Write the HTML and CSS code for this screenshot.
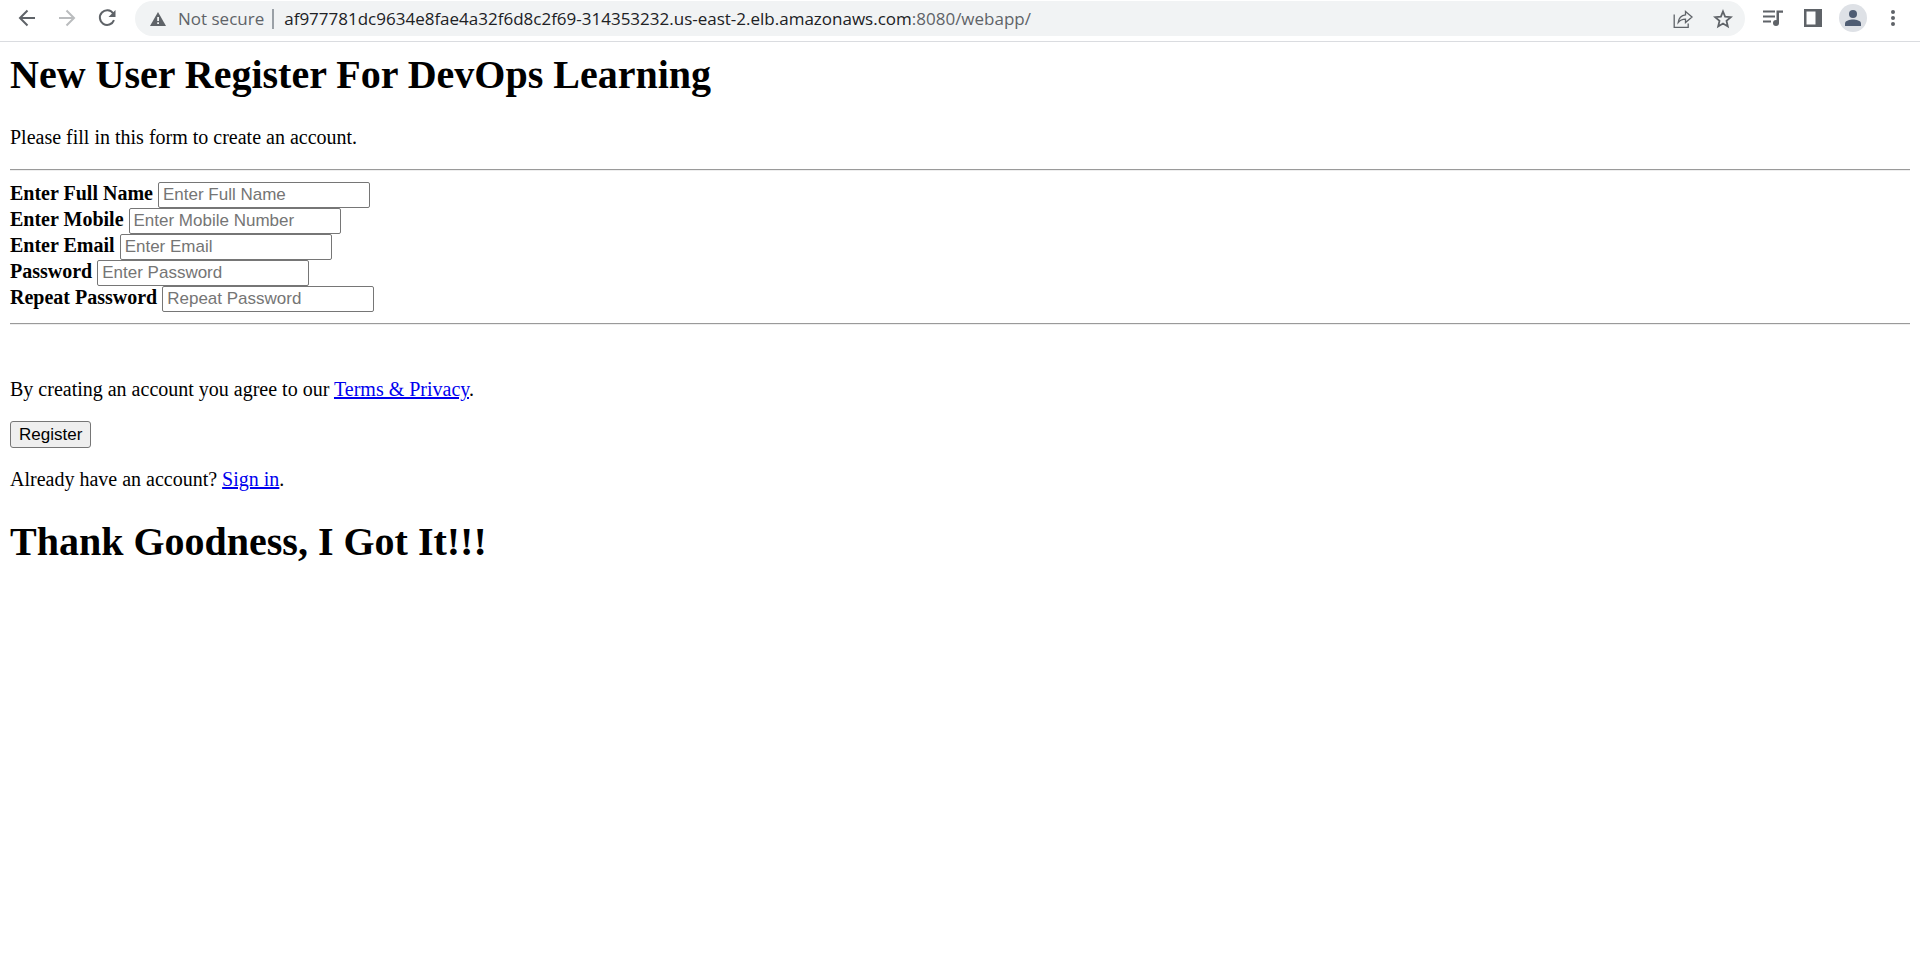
FILE: index.html
```html
<!DOCTYPE html>
<html lang="en">
<head>
<meta charset="utf-8">
<title>New User Register For DevOps Learning</title>
<link rel="stylesheet" href="styles.css">
</head>
<body>
<header class="toolbar">
  <nav class="nav">
    <button class="tool" type="button" aria-label="Back">
      <svg width="20" height="20" viewBox="0 0 20 20" fill="none" stroke="#5f6368" stroke-width="2"><path d="M18 10H3.500M10.500 2.500L3 10l7.500 7.500"/></svg>
    </button>
    <button class="tool" type="button" aria-label="Forward" disabled>
      <svg width="20" height="20" viewBox="0 0 20 20" fill="none" stroke="#babcbe" stroke-width="2"><path d="M2 10h14.500M9.500 2.500L17 10l-7.500 7.500"/></svg>
    </button>
    <button class="tool" type="button" aria-label="Reload">
      <svg width="20" height="20" viewBox="0 0 20 20"><path d="M16.200 5.500A7.300 7.300 0 1 0 17 12.200" fill="none" stroke="#5f6368" stroke-width="2"/><path d="M18.500 2v7h-7z" fill="#5f6368"/></svg>
    </button>
  </nav>
  <div class="omnibox">
    <svg width="16" height="14" viewBox="0 0 16 14"><path d="M8 0l8 14H0z" fill="#5f6368"/><path d="M7.200 5h1.800v4H7.200zM7.200 10.300h1.800V12H7.200z" fill="#f1f3f4"/></svg>
    <span class="security">Not secure</span>
    <span class="divider"></span>
    <span class="url">af977781dc9634e8fae4a32f6d8c2f69-314353232.us-east-2.elb.amazonaws.com<span class="path">:8080/webapp/</span></span>
    <button class="tool" type="button" aria-label="Share">
      <svg width="20" height="20" viewBox="0 0 20 20" fill="none" stroke="#5f6368" stroke-width="1.300"><path d="M1.200 5.500v12.800h14V14.500"/><path d="M12.500 2.500L19 8l-6.500 5.500v-3.300c-3.500 0-5.500 1-7.300 3.300.5-4.500 3-7.200 7.300-7.700z"/></svg>
    </button>
    <button class="tool" type="button" aria-label="Bookmark">
      <svg width="20" height="20" viewBox="0 0 20 20" fill="none" stroke="#5f6368" stroke-width="1.800"><path d="M10 2.500l2.100 5.200 5.700.5-4.300 3.700 1.300 5.500-4.800-2.900-4.800 2.900 1.300-5.500-4.300-3.700 5.700-.5z"/></svg>
    </button>
  </div>
  <div class="nav">
    <button class="tool" type="button" aria-label="Media controls">
      <svg width="20" height="20" viewBox="0 0 20 20" fill="#5f6368"><path d="M0 2.500h12v2H0zM0 7.500h12v2H0zM0 12.500h8v2H0zM13.500 2.500H20v2.200h-4V15h-2.500z"/><circle cx="13" cy="15" r="3"/></svg>
    </button>
    <button class="tool" type="button" aria-label="Side panel">
      <svg width="20" height="20" viewBox="0 0 20 20"><path d="M1 1h18v18H1z" fill="#5f6368"/><path d="M3.500 3.500h9v13h-9z" fill="#fff"/></svg>
    </button>
    <button class="tool" type="button" aria-label="Profile">
      <svg width="28" height="28" viewBox="0 0 28 28"><circle cx="14" cy="14" r="14" fill="#dee1e6"/><circle cx="14" cy="10" r="4" fill="#4f5d73"/><path d="M6 22v-2.500c0-3 5-4 8-4s8 1 8 4V22z" fill="#4f5d73"/></svg>
    </button>
    <button class="tool" type="button" aria-label="Menu">
      <svg width="20" height="20" viewBox="0 0 20 20" fill="#5f6368"><circle cx="10" cy="4" r="2"/><circle cx="10" cy="10" r="2"/><circle cx="10" cy="16" r="2"/></svg>
    </button>
  </div>
</header>
<main class="page">
  <form>
    <h1 class="title">New User Register For DevOps Learning</h1>
    <p class="text">Please fill in this form to create an account.</p>
    <hr class="rule">
    <div class="fields">
      <div class="field"><label for="name">Enter Full Name</label><input id="name" type="text" placeholder="Enter Full Name"></div>
      <div class="field"><label for="mobile">Enter Mobile</label><input id="mobile" type="text" placeholder="Enter Mobile Number"></div>
      <div class="field"><label for="email">Enter Email</label><input id="email" type="text" placeholder="Enter Email"></div>
      <div class="field"><label for="psw">Password</label><input id="psw" type="password" placeholder="Enter Password"></div>
      <div class="field"><label for="psw-repeat">Repeat Password</label><input id="psw-repeat" type="password" placeholder="Repeat Password"></div>
    </div>
    <hr class="rule">
    <br>
    <p class="text">By creating an account you agree to our <a href="#">Terms &amp; Privacy</a>.</p>
    <button class="register" type="submit">Register</button>
    <p class="text">Already have an account? <a href="#">Sign in</a>.</p>
    <h1 class="title">Thank Goodness, I Got It!!!</h1>
  </form>
</main>
</body>
</html>
```
FILE: styles.css
```css
* {
  box-sizing: border-box;
}

body {
  margin: 0;
  background: #fff;
  color: #000;
  font: 20px/23px "Liberation Serif", "Times New Roman", serif;
}

.toolbar {
  display: flex;
  gap: 8px;
  padding: 1px 7px 5px;
  border-bottom: 1px solid #dadce0;
}

.nav {
  display: flex;
}

.tool {
  display: flex;
  align-items: center;
  justify-content: center;
  flex: none;
  width: 40px;
  height: 34px;
  padding: 0;
  border: 0;
  background: none;
}

.omnibox {
  display: flex;
  flex: 1;
  align-items: center;
  min-width: 0;
  height: 35px;
  padding: 0 2px 0 15px;
  border-radius: 18px;
  background: #f1f3f4;
  color: #202124;
  font: 17px/24px "Open Sans", "Segoe UI", sans-serif;
}

.security {
  margin-left: 12px;
  color: #5f6368;
}

.divider {
  width: 2px;
  height: 20px;
  margin: 0 10px 0 8px;
  background: #9aa0a6;
}

.url {
  flex: 1;
  min-width: 0;
  overflow: hidden;
  white-space: nowrap;
}

.path {
  color: #5f6368;
}

.page {
  padding: 10px;
}

.title {
  margin: 28px 0;
  font-size: 40px;
  line-height: 46px;
}

.title:first-child {
  margin-top: 0;
}

.text {
  margin: 20px 0;
}

.rule {
  margin: 10px 0;
  border: 0;
  border-top: 1px solid #9a9a9a;
  border-bottom: 1px solid #eeeeee;
}

.fields {
  padding: 1px 0;
}

.field {
  display: flex;
  align-items: baseline;
  gap: 5px;
  height: 26px;
}

.field label {
  font-weight: bold;
}

.field input {
  width: 212px;
  height: 26px;
  padding: 0 4px;
  border: 1px solid #767676;
  border-radius: 2px;
  background: #fff;
  font: 17px/20px "Liberation Sans", Arial, sans-serif;
}

.field input::placeholder {
  color: #757575;
}

.register {
  display: block;
  height: 27px;
  padding: 0 8px;
  border: 1px solid #767676;
  border-radius: 3px;
  background: #efefef;
  color: #000;
  font: 17px/20px "Liberation Sans", Arial, sans-serif;
}

a {
  color: #0000ee;
}
```
